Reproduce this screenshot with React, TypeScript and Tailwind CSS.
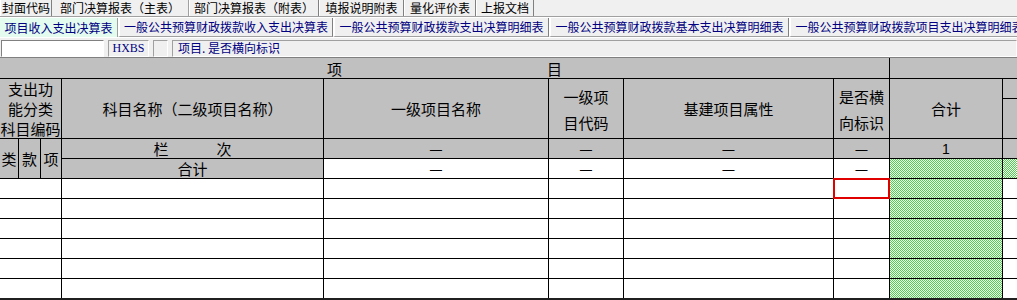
import React from "react";

const cjk = "font-['Noto_Sans_CJK_SC','Noto_Sans',sans-serif]";

const topTabs = [
  { label: "封面代码", w: "w-[52px]", active: false },
  { label: "部门决算报表（主表）", w: "w-[137px]", active: true },
  { label: "部门决算报表（附表）", w: "w-[130px]", active: false },
  { label: "填报说明附表", w: "w-[85px]", active: false },
  { label: "量化评价表", w: "w-[72px]", active: false },
  { label: "上报文档", w: "w-[58px]", active: false },
];

const subTabs = [
  { label: "项目收入支出决算表", w: "w-[118px]", active: true },
  { label: "一般公共预算财政拨款收入支出决算表", w: "w-[215px]", active: false },
  { label: "一般公共预算财政拨款支出决算明细表", w: "w-[216px]", active: false },
  { label: "一般公共预算财政拨款基本支出决算明细表", w: "w-[240px]", active: false },
  { label: "一般公共预算财政拨款项目支出决算明细表", w: "w-[240px]", active: false },
];

const gray = "bg-[#c0c0c0]";
const hatch =
  "bg-[image:repeating-conic-gradient(#44d844_0_25%,#ffffff_0_50%)] bg-[length:2px_2px]";

function TopTabs() {
  return (
    <div className="flex h-[17px] border-b border-[#a0a0a0] bg-[#f0f0f0]">
      {topTabs.map((t) => (
        <div
          key={t.label}
          className={`${t.w} shrink-0 flex items-center justify-center text-[12px] leading-none text-black ${
            t.active ? "border-r border-[#a0a0a0]" : "border-l border-white border-r border-r-[#808080]"
          }`}
        >
          {t.label}
        </div>
      ))}
    </div>
  );
}

function SubTabs() {
  return (
    <div className="flex h-[20px] overflow-hidden border-t border-white bg-[#f0f0f0]">
      {subTabs.map((t) => (
        <div
          key={t.label}
          className={`${t.w} shrink-0 flex items-center justify-center whitespace-nowrap text-[12px] leading-none text-[#000080] ${
            t.active
              ? "bg-[#e3fcef] border-r border-[#a0a0a0]"
              : "border-l-2 border-l-white border-r border-r-[#808080] border-b border-b-[#a0a0a0]"
          }`}
        >
          {t.label}
        </div>
      ))}
    </div>
  );
}

function Toolbar() {
  return (
    <div className="flex h-[20px] items-center gap-[4px] border-t border-white bg-[#f0f0f0] pl-px pt-px">
      <div className="h-[17px] w-[103px] border border-t-[#808080] border-l-[#808080] border-b-white border-r-white bg-white" />
      <div className="flex h-[17px] w-[41px] items-center justify-center border border-t-[#a0a0a0] border-l-[#a0a0a0] border-b-white border-r-white font-['Liberation_Serif',serif] text-[12px] text-[#000080]">
        HXBS
      </div>
      <div className="h-[17px] w-[15px] border border-t-[#a0a0a0] border-l-[#a0a0a0] border-b-white border-r-white" />
      <div className="flex h-[17px] flex-1 items-center border border-t-[#a0a0a0] border-l-[#a0a0a0] border-b-white border-r-white pl-[5px] text-[12px] text-[#000080]">
        项目. 是否横向标识
      </div>
    </div>
  );
}

function Cell({
  className,
  children,
}: {
  className: string;
  children?: React.ReactNode;
}) {
  return <div className={`flex items-center justify-center text-black ${className}`}>{children}</div>;
}

function Grid() {
  const rowStart = [
    "row-start-6",
    "row-start-7",
    "row-start-8",
    "row-start-9",
    "row-start-10",
    "row-start-11",
  ];
  return (
    <div className="grid grid-cols-[18px_21px_20px_261px_224px_74px_209px_55px_112px_1fr] grid-rows-[20px_19px_39px_19px_19px_19px_19px_19px_19px_19px_19px] gap-px bg-black text-[15px] leading-none">
      {/* header row */}
      <Cell className={`${gray} col-start-1 col-span-8 row-start-1 gap-[205px]`}>
        <span>项</span>
        <span>目</span>
      </Cell>
      <Cell className={`${gray} col-start-9 col-span-2 row-start-1`} />

      {/* titles */}
      <Cell className={`${gray} col-start-1 col-span-3 row-start-2 row-span-2 flex-col leading-[20px]`}>
        <span>支出功</span>
        <span>能分类</span>
        <span className="whitespace-nowrap">科目编码</span>
      </Cell>
      <Cell className={`${gray} col-start-4 row-start-2 row-span-2`}>科目名称（二级项目名称）</Cell>
      <Cell className={`${gray} col-start-5 row-start-2 row-span-2`}>一级项目名称</Cell>
      <Cell className={`${gray} col-start-6 row-start-2 row-span-2 flex-col leading-[26px] pt-[3px]`}>
        <span>一级项</span>
        <span>目代码</span>
      </Cell>
      <Cell className={`${gray} col-start-7 row-start-2 row-span-2`}>基建项目属性</Cell>
      <Cell className={`${gray} col-start-8 row-start-2 row-span-2 flex-col leading-[26px] pt-[3px]`}>
        <span>是否横</span>
        <span>向标识</span>
      </Cell>
      <Cell className={`${gray} col-start-9 row-start-2 row-span-2`}>合计</Cell>
      <Cell className={`${gray} col-start-10 row-start-2`} />
      <Cell className={`${gray} col-start-10 row-start-3`} />

      {/* 栏次 row */}
      <Cell className={`${gray} col-start-1 row-start-4 row-span-2`}>类</Cell>
      <Cell className={`${gray} col-start-2 row-start-4 row-span-2`}>款</Cell>
      <Cell className={`${gray} col-start-3 row-start-4 row-span-2`}>项</Cell>
      <Cell className={`${gray} col-start-4 row-start-4 gap-[48px]`}>
        <span>栏</span>
        <span>次</span>
      </Cell>
      <Cell className={`${gray} col-start-5 row-start-4`}>—</Cell>
      <Cell className={`${gray} col-start-6 row-start-4`}>—</Cell>
      <Cell className={`${gray} col-start-7 row-start-4`}>—</Cell>
      <Cell className={`${gray} col-start-8 row-start-4`}>—</Cell>
      <Cell className={`${gray} col-start-9 row-start-4 font-['Liberation_Sans',sans-serif] text-[14px]`}>1</Cell>
      <Cell className={`${gray} col-start-10 row-start-4`} />

      {/* 合计 row */}
      <Cell className={`${gray} col-start-4 row-start-5`}>合计</Cell>
      <Cell className="bg-white col-start-5 row-start-5">—</Cell>
      <Cell className="bg-white col-start-6 row-start-5">—</Cell>
      <Cell className="bg-white col-start-7 row-start-5">—</Cell>
      <Cell className="bg-white col-start-8 row-start-5">—</Cell>
      <Cell className={`${hatch} col-start-9 row-start-5`} />
      <Cell className={`${hatch} col-start-10 row-start-5`} />

      {/* data rows */}
      {rowStart.map((rs, i) => (
        <React.Fragment key={rs}>
          <Cell className={`bg-white col-start-1 col-span-3 ${rs}`} />
          <Cell className={`bg-white col-start-4 ${rs}`} />
          <Cell className={`bg-white col-start-5 ${rs}`} />
          <Cell className={`bg-white col-start-6 ${rs}`} />
          <Cell className={`bg-white col-start-7 ${rs}`} />
          <Cell
            className={`bg-white col-start-8 ${rs} ${
              i === 0 ? "border-2 border-[#e00000] -m-px" : ""
            }`}
          />
          <Cell className={`${hatch} col-start-9 ${rs}`} />
          <Cell className={`bg-white col-start-10 ${rs}`} />
        </React.Fragment>
      ))}
    </div>
  );
}

export default function App() {
  return (
    <div className={`h-[300px] w-[1017px] overflow-hidden bg-[#f0f0f0] ${cjk}`}>
      <TopTabs />
      <SubTabs />
      <Toolbar />
      <div className="h-px bg-[#808080]" />
      <Grid />
      <div className="h-[2px] bg-[#202020]" />
    </div>
  );
}
